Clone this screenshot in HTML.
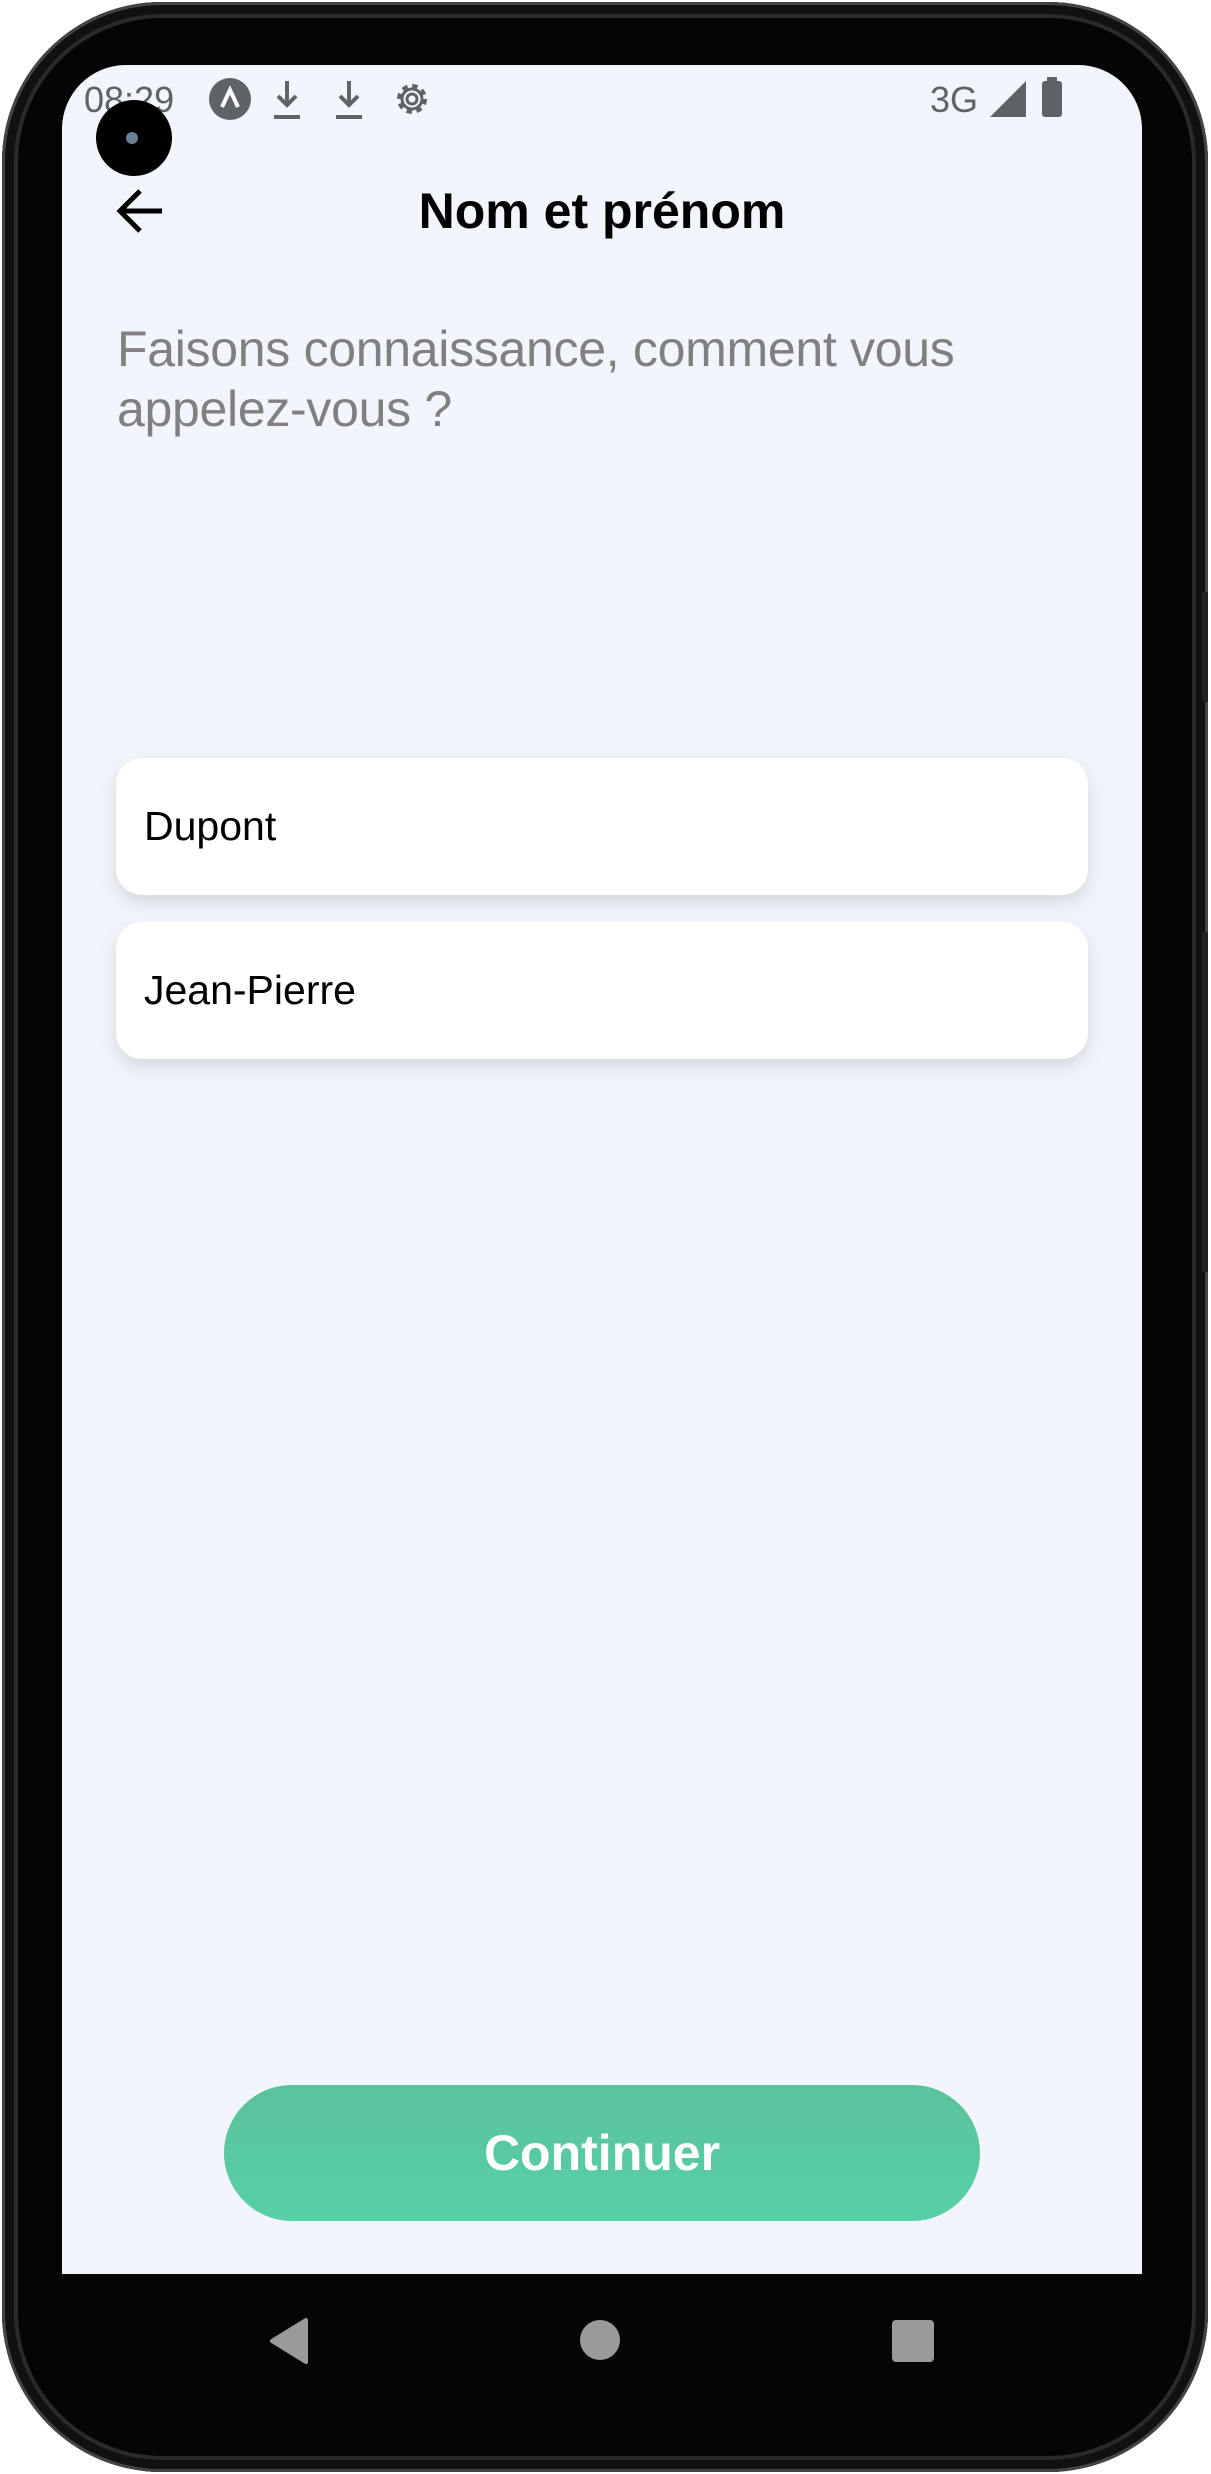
<!DOCTYPE html>
<html><head><meta charset="utf-8"><style>
*{margin:0;padding:0;box-sizing:border-box}
html,body{width:1211px;height:2474px;background:#fff;overflow:hidden;font-family:"Liberation Sans",sans-serif}
.phone{position:absolute;left:2px;top:2px;width:1206px;height:2470px;background:#050505;border-radius:160px;box-shadow:inset 0 0 0 3px #444,inset 0 0 0 12px #111,inset 0 0 0 16px #2a2a2a}
.btn-side{position:absolute;right:0;width:6px;background:#222}
.screen{position:absolute;left:60px;top:63px;width:1080px;height:2209px;background:#f2f5fc;border-radius:64px 64px 0 0;overflow:hidden}
.status{position:absolute;top:12px;left:22px;right:22px;height:60px;color:#5f6368;font-size:36px}
.cam{position:absolute;left:94px;top:98px;width:76px;height:76px;border-radius:50%;background:#000}
.cam:after{content:"";position:absolute;left:30px;top:32px;width:12px;height:12px;border-radius:50%;background:#6b7f98}
.title{position:absolute;top:117px;left:0;width:1080px;text-align:center;font-size:50px;font-weight:bold;color:#000}
.sub{position:absolute;left:55px;top:254px;width:1000px;font-size:50px;line-height:60px;color:#808080;letter-spacing:-0.3px}
.inp{position:absolute;left:54px;width:972px;height:137px;background:#fff;border-radius:26px;box-shadow:0 8px 18px rgba(0,0,0,.12);font-size:41px;padding-left:28px;line-height:137px;color:#000}
.cont{position:absolute;left:162px;top:2020px;width:756px;height:136px;border-radius:68px;background:linear-gradient(#5ac19c,#57d1a8);color:#fff;font-size:50px;font-weight:bold;text-align:center;line-height:136px}
</style></head><body>
<div class="phone">
<div class="btn-side" style="top:590px;height:110px"></div>
<div class="btn-side" style="top:930px;height:340px"></div>
<div class="screen">
 <div class="status">
  <span style="position:absolute;left:0;top:2px">08:29</span>
  <svg style="position:absolute;left:124px;top:0" width="44" height="44"><circle cx="22" cy="22" r="21" fill="#5f6368"/><path d="M14 30 L22 13 L30 30" stroke="#fff" stroke-width="4" fill="none"/></svg>
  <svg style="position:absolute;left:186px;top:0" width="34" height="44"><path d="M17 4V28M8 19L17 28L26 19M4 40H30" stroke="#5f6368" stroke-width="4" fill="none"/></svg>
  <svg style="position:absolute;left:248px;top:0" width="34" height="44"><path d="M17 4V28M8 19L17 28L26 19M4 40H30" stroke="#5f6368" stroke-width="4" fill="none"/></svg>
  <svg style="position:absolute;left:308px;top:2px" width="40" height="40"><circle cx="20" cy="20" r="12" stroke="#5f6368" stroke-width="6" stroke-dasharray="5 4.4" fill="none"/><circle cx="20" cy="20" r="10" stroke="#5f6368" stroke-width="3" fill="none"/><circle cx="20" cy="20" r="5" stroke="#5f6368" stroke-width="3" fill="none"/></svg>
  <span style="position:absolute;left:846px;top:2px">3G</span>
  <svg style="position:absolute;left:906px;top:4px" width="36" height="36"><path d="M36 0V36H0Z" fill="#5f6368"/></svg>
  <svg style="position:absolute;left:958px;top:0" width="24" height="40"><rect x="5" y="0" width="10" height="4" fill="#5f6368"/><rect x="0" y="4" width="20" height="36" rx="3" fill="#5f6368"/></svg>
 </div>
 <svg style="position:absolute;left:52px;top:122px" width="52" height="48"><path d="M48 24H6M26 4L6 24L26 44" stroke="#000" stroke-width="5" fill="none"/></svg>
 <div class="title">Nom et prénom</div>
 <div class="sub">Faisons connaissance, comment vous<br>appelez-vous ?</div>
 <div class="inp" style="top:693px">Dupont</div>
 <div class="inp" style="top:857px">Jean-Pierre</div>
 <div class="cont">Continuer</div>
</div>
<div class="cam"></div>
<svg style="position:absolute;left:266px;top:2316px" width="40" height="46"><path d="M38 2V44L4 23Z" fill="#9a9a9a" stroke="#9a9a9a" stroke-width="4" stroke-linejoin="round"/></svg>
<div style="position:absolute;left:578px;top:2318px;width:40px;height:40px;border-radius:50%;background:#9a9a9a"></div>
<div style="position:absolute;left:890px;top:2318px;width:42px;height:42px;border-radius:4px;background:#9a9a9a"></div>
</div>
</body></html>
